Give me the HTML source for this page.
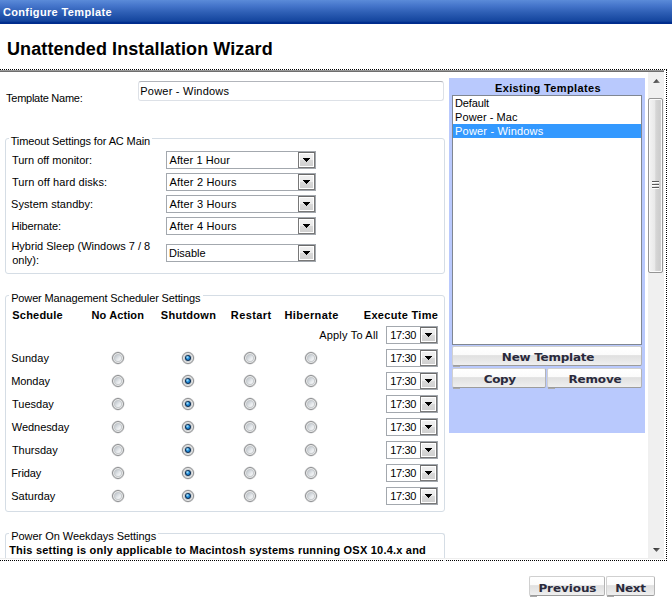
<!DOCTYPE html>
<html><head><meta charset="utf-8"><title>Configure Template</title>
<style>
html,body{margin:0;padding:0;background:#fff;}
body{width:672px;height:600px;overflow:hidden;position:relative;font-family:"Liberation Sans",Arial,sans-serif;font-size:11px;color:#000;}
.a{position:absolute;}
.t{position:absolute;white-space:nowrap;line-height:14px;}
.b{font-weight:bold;}
#tb{left:0;top:0;width:672px;height:24px;background:linear-gradient(#5b8bd9 0%,#4474ca 25%,#2f60b6 50%,#1b4ca4 78%,#14459e 88%,#012f8f 93%,#002a8c 100%);}
.fs{position:absolute;border:1px solid #d5dde5;border-radius:3px;box-sizing:border-box;}
.lg{position:absolute;background:#fff;height:4px;}
.inp{position:absolute;border:1px solid #dde1e7;border-top-color:#b2b5bb;border-radius:3px;background:#fff;box-sizing:border-box;}
.sel{position:absolute;box-sizing:border-box;border:1px solid #a3a8ae;background:#fff;height:18px;}
.sel i{position:absolute;right:0;top:0;width:17px;height:16px;box-sizing:border-box;border:1px solid #787878;border-top-color:#6a6a6a;box-shadow:inset 0 0 0 1px #fff;background:linear-gradient(#f1f1f1 0%,#ebebeb 48%,#d9d9d9 52%,#cfcfcf 100%);}
.sel i:after{content:"";position:absolute;left:4px;top:5px;width:7px;height:4px;background:linear-gradient(#000,#000) 0 0/7px 1px no-repeat,linear-gradient(#000,#000) 1px 1px/5px 1px no-repeat,linear-gradient(#000,#000) 2px 2px/3px 1px no-repeat,linear-gradient(#000,#000) 3px 3px/1px 1px no-repeat;}
.rd{position:absolute;width:12px;height:12px;border-radius:50%;border:1px solid #8b8d8f;box-sizing:border-box;background:linear-gradient(135deg,#b4bcc3 15%,#e6e9ec 55%,#ffffff 85%);box-shadow:inset 0 0 0 1px #eeeeee,inset 0 0 0 2px #c6cacd,0 0 0 0.5px rgba(139,141,143,.35);}
.rd.on{background:#fafafa;}
.rd.on:after{content:"";position:absolute;left:1.6px;top:1.7px;width:6.8px;height:6.8px;border-radius:50%;background:radial-gradient(circle 1.8px at 40% 36%,rgba(185,238,255,.95) 0,rgba(150,225,255,0) 100%),radial-gradient(circle closest-side at 50% 50%,#2fa2ea 0,#1f86d4 48%,#114f88 66%,#0a2d52 84%,#0a2d52 100%);}
.btn{position:absolute;box-sizing:border-box;border:1px solid #d0d0d0;border-bottom-color:#9c9c9c;border-right-color:#b4b4b4;border-radius:2px;background:linear-gradient(#ffffff 0%,#fbfbfb 43%,#e0e0e0 48%,#efefef 100%);}
</style></head><body>
<div id="tb" class="a"></div>
<div class="a" style="left:0;top:69px;width:666px;height:491px;border-top:1px dotted #000;border-right:1px dotted #000;border-bottom:1px dotted #000;box-sizing:content-box;height:490px"></div>
<div class="a" style="left:0;top:70px;width:664px;height:1px;background:#9a9a9a"></div>
<div class="a" style="left:0;top:71px;width:664px;height:1px;background:#6e6e6e"></div>
<div class="inp" style="left:138px;top:81px;width:306px;height:20px"></div>
<div class="fs" style="left:5px;top:138px;width:440px;height:136px"></div>
<div class="lg" style="left:9px;top:137px;width:143px"></div>
<div class="fs" style="left:5px;top:295px;width:440px;height:217px"></div>
<div class="lg" style="left:9px;top:294px;width:194px"></div>
<div class="fs" style="left:5px;top:533px;width:440px;height:60px;border-bottom:none"></div>
<div class="lg" style="left:9px;top:532px;width:149px"></div>
<div class="a" style="left:0;top:558px;width:666px;height:2px;background:#fff"></div>
<div class="a" style="left:0;top:561px;width:672px;height:39px;background:#fff"></div>
<div class="a" style="left:0;top:558px;width:665px;height:1px;background:#eeeeee"></div>
<div class="sel" style="left:166px;top:151px;width:150px"><i></i></div>
<div class="sel" style="left:166px;top:173px;width:150px"><i></i></div>
<div class="sel" style="left:166px;top:195px;width:150px"><i></i></div>
<div class="sel" style="left:166px;top:217px;width:150px"><i></i></div>
<div class="sel" style="left:166px;top:244px;width:150px"><i></i></div>
<div class="sel" style="left:386px;top:326px;width:52px"><i></i></div>
<div class="sel" style="left:386px;top:349px;width:52px"><i></i></div>
<div class="rd" style="left:112px;top:352px"></div>
<div class="rd on" style="left:182px;top:352px"></div>
<div class="rd" style="left:244px;top:352px"></div>
<div class="rd" style="left:305px;top:352px"></div>
<div class="sel" style="left:386px;top:372px;width:52px"><i></i></div>
<div class="rd" style="left:112px;top:375px"></div>
<div class="rd on" style="left:182px;top:375px"></div>
<div class="rd" style="left:244px;top:375px"></div>
<div class="rd" style="left:305px;top:375px"></div>
<div class="sel" style="left:386px;top:395px;width:52px"><i></i></div>
<div class="rd" style="left:112px;top:398px"></div>
<div class="rd on" style="left:182px;top:398px"></div>
<div class="rd" style="left:244px;top:398px"></div>
<div class="rd" style="left:305px;top:398px"></div>
<div class="sel" style="left:386px;top:418px;width:52px"><i></i></div>
<div class="rd" style="left:112px;top:421px"></div>
<div class="rd on" style="left:182px;top:421px"></div>
<div class="rd" style="left:244px;top:421px"></div>
<div class="rd" style="left:305px;top:421px"></div>
<div class="sel" style="left:386px;top:441px;width:52px"><i></i></div>
<div class="rd" style="left:112px;top:444px"></div>
<div class="rd on" style="left:182px;top:444px"></div>
<div class="rd" style="left:244px;top:444px"></div>
<div class="rd" style="left:305px;top:444px"></div>
<div class="sel" style="left:386px;top:464px;width:52px"><i></i></div>
<div class="rd" style="left:112px;top:467px"></div>
<div class="rd on" style="left:182px;top:467px"></div>
<div class="rd" style="left:244px;top:467px"></div>
<div class="rd" style="left:305px;top:467px"></div>
<div class="sel" style="left:386px;top:487px;width:52px"><i></i></div>
<div class="rd" style="left:112px;top:490px"></div>
<div class="rd on" style="left:182px;top:490px"></div>
<div class="rd" style="left:244px;top:490px"></div>
<div class="rd" style="left:305px;top:490px"></div>
<div class="a" style="left:449px;top:78px;width:196px;height:355px;background:#b9c9fd"></div>
<div class="a" style="left:452px;top:95px;width:190px;height:250px;box-sizing:border-box;border:1px solid #808792;background:#fff"></div>
<div class="a" style="left:453px;top:124px;width:188px;height:14px;background:#3399ff"></div>
<div class="btn" style="left:452px;top:346px;width:190px;height:20px"></div>
<div class="btn" style="left:452px;top:368px;width:94px;height:20px"></div>
<div class="btn" style="left:547px;top:368px;width:95px;height:20px"></div>
<div class="a" style="left:453px;top:366px;width:7px;height:1px;background:#aaa"></div>
<div class="a" style="left:453px;top:388px;width:7px;height:1px;background:#aaa"></div>
<div class="a" style="left:548px;top:388px;width:7px;height:1px;background:#aaa"></div>
<div class="a" style="left:648px;top:72px;width:16px;height:486px;background:#f0f0f0"></div>
<div class="a" style="left:648px;top:98px;width:15px;height:175px;box-sizing:border-box;border:1px solid #959595;border-radius:2px;box-shadow:inset 0 0 0 1px #fafafa;background:linear-gradient(90deg,#f4f4f4 0%,#e9e9e9 45%,#d6d6d6 52%,#cdcdcd 85%,#dadada 100%)"></div>
<svg class="a" style="left:648px;top:72px" width="17" height="486" viewBox="0 0 17 486">
<defs><linearGradient id="ga" x1="0" y1="0" x2="1" y2="1"><stop offset="0" stop-color="#222"/><stop offset="1" stop-color="#8a8a8a"/></linearGradient></defs>
<path d="M5 11 L8.500 7 L12 11 Z" fill="url(#ga)"/>
<path d="M5 476 L12 476 L8.500 480 Z" fill="url(#ga)"/>
<path d="M4 110.500h7M4 113.500h7M4 116.500h7" stroke="#fff" stroke-width="1"/>
<path d="M4 109.500h7M4 112.500h7M4 115.500h7" stroke="#5a5a5a" stroke-width="1"/>
</svg>
<div class="btn" style="left:529px;top:576px;width:76px;height:20px"></div>
<div class="btn" style="left:606px;top:576px;width:49px;height:20px"></div>
<div class="a" style="left:530px;top:596px;width:7px;height:1px;background:#aaa"></div>
<div class="a" style="left:607px;top:596px;width:7px;height:1px;background:#aaa"></div>
<div id="t0" class="t b" style="left:2.88px;top:4.50px;color:#fff;letter-spacing:0.365px;">Configure Template</div>
<div id="t1" class="t b" style="left:7.03px;top:38.00px;font-size:18px;line-height:22px;letter-spacing:0.096px;">Unattended Installation Wizard</div>
<div id="t2" class="t" style="left:6.07px;top:90.70px;letter-spacing:-0.266px;">Template Name:</div>
<div id="t3" class="t" style="left:140.25px;top:83.60px;letter-spacing:0.230px;">Power - Windows</div>
<div id="t4" class="t" style="left:10.67px;top:134.00px;letter-spacing:-0.119px;">Timeout Settings for AC Main</div>
<div id="t5" class="t" style="left:11.88px;top:153.00px;">Turn off monitor:</div>
<div id="t6" class="t" style="left:11.88px;top:175.00px;letter-spacing:0.085px;">Turn off hard disks:</div>
<div id="t7" class="t" style="left:11.07px;top:197.00px;letter-spacing:0.055px;">System standby:</div>
<div id="t8" class="t" style="left:11.41px;top:219.00px;letter-spacing:-0.121px;">Hibernate:</div>
<div id="t9" class="t" style="left:11.41px;top:239.00px;letter-spacing:0.002px;">Hybrid Sleep (Windows 7 / 8</div>
<div id="t10" class="t" style="left:12.20px;top:253.00px;letter-spacing:-0.016px;">only):</div>
<div id="t11" class="t" style="left:169.50px;top:153.00px;letter-spacing:0.106px;">After 1 Hour</div>
<div id="t12" class="t" style="left:169.50px;top:175.00px;letter-spacing:0.190px;">After 2 Hours</div>
<div id="t13" class="t" style="left:169.50px;top:197.00px;letter-spacing:0.190px;">After 3 Hours</div>
<div id="t14" class="t" style="left:169.50px;top:219.00px;letter-spacing:0.190px;">After 4 Hours</div>
<div id="t15" class="t" style="left:169.06px;top:246.00px;letter-spacing:-0.031px;">Disable</div>
<div id="t16" class="t" style="left:11.15px;top:291.00px;letter-spacing:-0.135px;">Power Management Scheduler Settings</div>
<div id="t17" class="t b" style="left:12.35px;top:308.00px;letter-spacing:0.189px;">Schedule</div>
<div id="t18" class="t b" style="left:91.54px;top:308.00px;letter-spacing:0.103px;">No Action</div>
<div id="t19" class="t b" style="left:160.78px;top:308.00px;letter-spacing:0.280px;">Shutdown</div>
<div id="t20" class="t b" style="left:230.86px;top:308.00px;letter-spacing:0.383px;">Restart</div>
<div id="t21" class="t b" style="left:284.55px;top:308.00px;letter-spacing:0.377px;">Hibernate</div>
<div id="t22" class="t b" style="left:363.78px;top:308.00px;letter-spacing:0.308px;">Execute Time</div>
<div id="t23" class="t" style="left:319.16px;top:328.00px;letter-spacing:0.196px;">Apply To All</div>
<div id="t24" class="t" style="left:390.13px;top:328.00px;letter-spacing:-0.320px;">17:30</div>
<div id="t25" class="t" style="left:11.28px;top:351.00px;letter-spacing:0.078px;">Sunday</div>
<div id="t26" class="t" style="left:390.13px;top:351.00px;letter-spacing:-0.320px;">17:30</div>
<div id="t27" class="t" style="left:11.15px;top:374.00px;letter-spacing:-0.060px;">Monday</div>
<div id="t28" class="t" style="left:390.13px;top:374.00px;letter-spacing:-0.320px;">17:30</div>
<div id="t29" class="t" style="left:11.91px;top:397.00px;letter-spacing:0.031px;">Tuesday</div>
<div id="t30" class="t" style="left:390.13px;top:397.00px;letter-spacing:-0.320px;">17:30</div>
<div id="t31" class="t" style="left:11.87px;top:420.00px;letter-spacing:-0.065px;">Wednesday</div>
<div id="t32" class="t" style="left:390.13px;top:420.00px;letter-spacing:-0.320px;">17:30</div>
<div id="t33" class="t" style="left:11.91px;top:443.00px;letter-spacing:-0.010px;">Thursday</div>
<div id="t34" class="t" style="left:390.13px;top:443.00px;letter-spacing:-0.320px;">17:30</div>
<div id="t35" class="t" style="left:11.23px;top:466.00px;letter-spacing:-0.089px;">Friday</div>
<div id="t36" class="t" style="left:390.13px;top:466.00px;letter-spacing:-0.320px;">17:30</div>
<div id="t37" class="t" style="left:11.28px;top:489.00px;letter-spacing:0.008px;">Saturday</div>
<div id="t38" class="t" style="left:390.13px;top:489.00px;letter-spacing:-0.320px;">17:30</div>
<div id="t39" class="t" style="left:11.15px;top:529.00px;letter-spacing:-0.035px;">Power On Weekdays Settings</div>
<div id="t40" class="t b" style="left:9.18px;top:543.00px;letter-spacing:0.212px;">This setting is only applicable to Macintosh systems running OSX 10.4.x and</div>
<div id="t41" class="t b" style="left:494.96px;top:81.00px;letter-spacing:0.366px;">Existing Templates</div>
<div id="t42" class="t" style="left:455.02px;top:95.50px;letter-spacing:-0.141px;">Default</div>
<div id="t43" class="t" style="left:455.10px;top:109.50px;letter-spacing:0.071px;">Power - Mac</div>
<div id="t44" class="t" style="left:455.10px;top:123.50px;color:#fff;letter-spacing:0.181px;">Power - Windows</div>
<div id="t45" class="t b" style="left:501.86px;top:350.30px;font-size:12px;font-family:'DejaVu Sans',Verdana,sans-serif;color:#2a2a3c;letter-spacing:-0.261px;transform:scaleY(0.915);transform-origin:0 11.0px;">New Template</div>
<div id="t46" class="t b" style="left:483.77px;top:372.30px;font-size:12px;font-family:'DejaVu Sans',Verdana,sans-serif;color:#2a2a3c;letter-spacing:-0.349px;transform:scaleY(0.915);transform-origin:0 11.0px;">Copy</div>
<div id="t47" class="t b" style="left:568.44px;top:372.30px;font-size:12px;font-family:'DejaVu Sans',Verdana,sans-serif;color:#2a2a3c;letter-spacing:-0.162px;transform:scaleY(0.915);transform-origin:0 11.0px;">Remove</div>
<div id="t48" class="t b" style="left:538.38px;top:580.60px;font-size:12px;font-family:'DejaVu Sans',Verdana,sans-serif;color:#2a2a3c;letter-spacing:-0.088px;transform:scaleY(0.915);transform-origin:0 11.0px;">Previous</div>
<div id="t49" class="t b" style="left:615.25px;top:580.60px;font-size:12px;font-family:'DejaVu Sans',Verdana,sans-serif;color:#2a2a3c;letter-spacing:-0.344px;transform:scaleY(0.915);transform-origin:0 11.0px;">Next</div>
</body></html>
